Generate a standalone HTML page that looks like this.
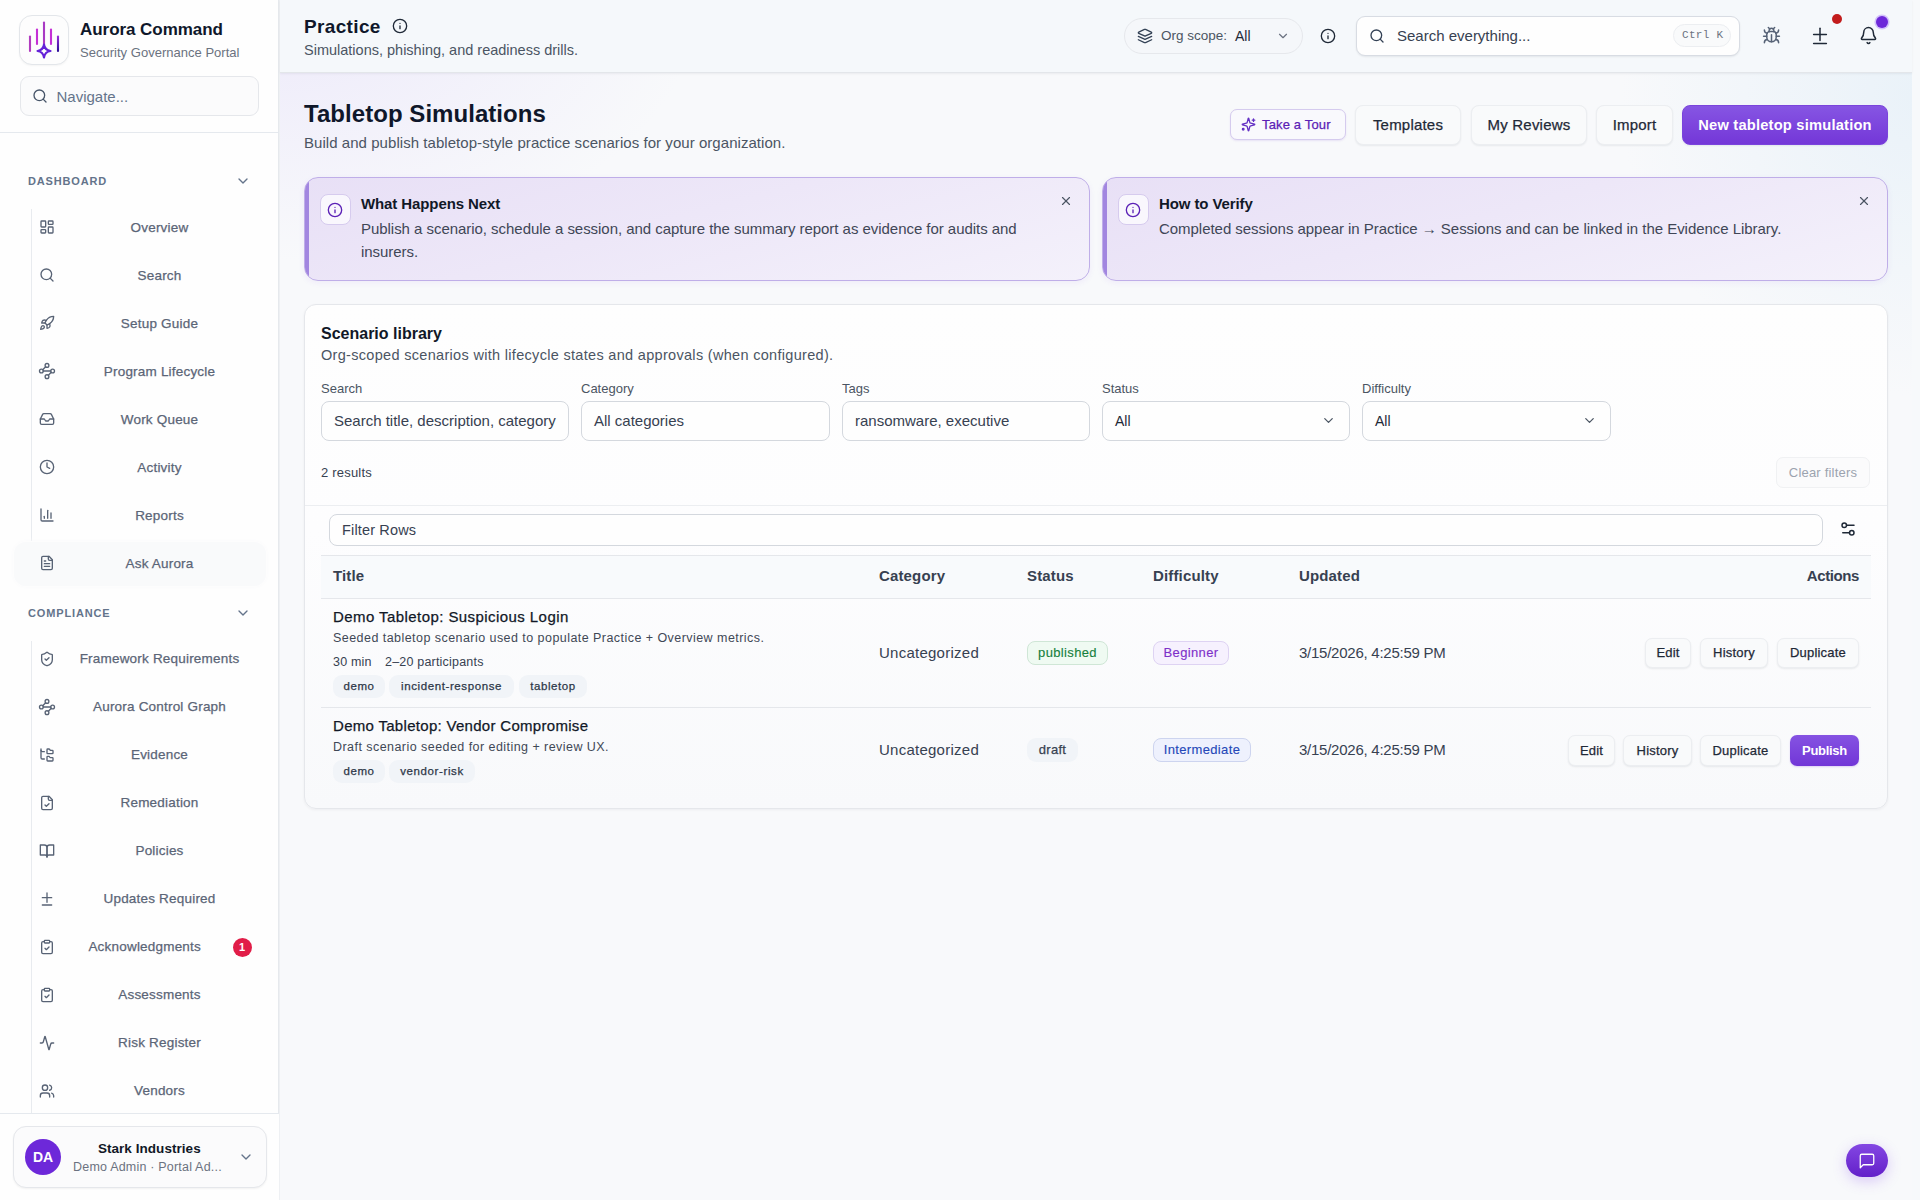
<!DOCTYPE html>
<html><head><meta charset="utf-8"><title>Practice</title><style>
*{box-sizing:border-box;margin:0;padding:0}
html,body{width:1920px;height:1200px;overflow:hidden}
body{-webkit-font-smoothing:antialiased;font-family:"Liberation Sans",sans-serif;color:#111827;background:#f8f9fb;position:relative}
.abs{position:absolute}
.t{white-space:nowrap}
.m{-webkit-text-stroke:0.25px currentColor}
.m2{-webkit-text-stroke:0.12px currentColor}
svg{display:block}
</style></head><body>
<div class="abs" style="left:280px;top:0;width:1640px;height:1200px;background:radial-gradient(ellipse 420px 260px at 0% 0%,rgba(233,228,250,.75),rgba(248,249,251,0) 100%),radial-gradient(ellipse 300px 300px at 100% 8%,rgba(230,240,248,.8),rgba(248,249,251,0) 100%),#f8f9fb"></div>
<div class="abs" style="left:1912px;top:0;width:8px;height:1200px;background:#f7f9fb"></div>
<div class="abs" style="left:0;top:0;width:279px;height:1200px;background:#fefefe;border-right:1px solid #e6e9ed;box-shadow:1px 0 0 #eef0f3"></div>
<div class="abs" style="left:19px;top:15px;width:50px;height:50px;border:1px solid #e3e6ea;border-radius:13px;background:#fdfdfd;box-shadow:0 1px 2px rgba(0,0,0,.04)"></div>
<svg class="abs" style="left:19px;top:15px" width="50" height="50" viewBox="0 0 50 50">
<defs><linearGradient id="lg" x1="0" y1="0" x2="0" y2="1"><stop offset="0" stop-color="#b83dc6"/><stop offset=".55" stop-color="#c02cd0"/><stop offset="1" stop-color="#3a10a8"/></linearGradient>
<linearGradient id="lg2" gradientUnits="userSpaceOnUse" x1="0" y1="21" x2="0" y2="36"><stop offset="0" stop-color="#9b30d8"/><stop offset="1" stop-color="#2e0f9a"/></linearGradient></defs>
<g stroke-width="2.1" stroke-linecap="round" fill="none">
<line x1="11" y1="21.5" x2="11" y2="36" stroke="#b23cc0"/>
<line x1="18" y1="14.5" x2="18" y2="29" stroke="#c52fd6"/>
<line x1="25" y1="7.5" x2="25" y2="30" stroke="#a93ac4"/>
<line x1="32" y1="14.5" x2="32" y2="29" stroke="#c52fd6"/>
<line x1="39" y1="21.5" x2="39" y2="36" stroke="url(#lg2)"/>
</g>
<path d="M25 29.5 Q25.8 35.2 31.5 36 Q25.8 36.8 25 42.5 Q24.2 36.8 18.5 36 Q24.2 35.2 25 29.5Z" fill="none" stroke="#6422d8" stroke-width="2.1" stroke-linejoin="round"/>
</svg>
<div class="abs t " style="left:80px;top:19px;font-size:17px;color:#0f172a;font-weight:700;letter-spacing:-0.05px;line-height:22px">Aurora Command</div>
<div class="abs t " style="left:80px;top:45px;font-size:13px;color:#6b7280;font-weight:400;letter-spacing:0.02px;line-height:16px">Security Governance Portal</div>
<div class="abs" style="left:20px;top:76px;width:239px;height:40px;border:1px solid #e5e7eb;border-radius:9px;background:#fbfbfc"></div>
<svg class="abs" style="left:32px;top:88px" width="16" height="16" viewBox="0 0 24 24" fill="none" stroke="#475569" stroke-width="2" stroke-linecap="round" stroke-linejoin="round"><circle cx="11" cy="11" r="8"/><path d="m21 21-4.3-4.3"/></svg>
<div class="abs t " style="left:56.5px;top:87.5px;line-height:18px;font-size:15px;color:#64748b;font-weight:400;">Navigate...</div>
<div class="abs" style="left:0;top:132px;width:279px;height:1px;background:#e5e9ee"></div>
<div class="abs t " style="left:28px;top:174.5px;line-height:13px;font-size:11px;color:#64748b;font-weight:700;letter-spacing:0.85px">DASHBOARD</div>
<svg class="abs" style="left:235px;top:173px" width="16" height="16" viewBox="0 0 24 24" fill="none" stroke="#64748b" stroke-width="2" stroke-linecap="round" stroke-linejoin="round"><path d="m6 9 6 6 6-6"/></svg>
<div class="abs" style="left:31px;top:209px;width:1px;height:332px;background:#e8ebef"></div>
<svg class="abs" style="left:39px;top:219px" width="16" height="16" viewBox="0 0 24 24" fill="none" stroke="#586375" stroke-width="2" stroke-linecap="round" stroke-linejoin="round"><rect width="7" height="9" x="3" y="3" rx="1"/><rect width="7" height="5" x="14" y="3" rx="1"/><rect width="7" height="9" x="14" y="12" rx="1"/><rect width="7" height="5" x="3" y="16" rx="1"/></svg>
<div class="abs t m" style="left:159.5px;top:219.5px;line-height:16px;font-size:13.5px;color:#5b6577;font-weight:400;transform:translateX(-50%);letter-spacing:0.2px">Overview</div>
<svg class="abs" style="left:39px;top:267px" width="16" height="16" viewBox="0 0 24 24" fill="none" stroke="#586375" stroke-width="2" stroke-linecap="round" stroke-linejoin="round"><circle cx="11" cy="11" r="8"/><path d="m21 21-4.3-4.3"/></svg>
<div class="abs t m" style="left:159.5px;top:267.5px;line-height:16px;font-size:13.5px;color:#5b6577;font-weight:400;transform:translateX(-50%);letter-spacing:0.2px">Search</div>
<svg class="abs" style="left:39px;top:315px" width="16" height="16" viewBox="0 0 24 24" fill="none" stroke="#586375" stroke-width="2" stroke-linecap="round" stroke-linejoin="round"><path d="M4.5 16.5c-1.5 1.26-2 5-2 5s3.74-.5 5-2c.71-.84.7-2.13-.09-2.91a2.18 2.18 0 0 0-2.91-.09z"/><path d="m12 15-3-3a22 22 0 0 1 2-3.95A12.88 12.88 0 0 1 22 2c0 2.72-.78 7.5-6 11a22.35 22.35 0 0 1-4 2z"/><path d="M9 12H4s.55-3.03 2-4c1.62-1.08 5 0 5 0"/><path d="M12 15v5s3.03-.55 4-2c1.08-1.62 0-5 0-5"/></svg>
<div class="abs t m" style="left:159.5px;top:315.5px;line-height:16px;font-size:13.5px;color:#5b6577;font-weight:400;transform:translateX(-50%);letter-spacing:0.2px">Setup Guide</div>
<svg class="abs" style="left:38px;top:362px" width="18" height="18" viewBox="0 0 24 24" fill="none" stroke="#586375" stroke-width="1.8" stroke-linecap="round" stroke-linejoin="round"><circle cx="12" cy="4.5" r="2.5"/><path d="m10.2 6.3-3.9 3.9"/><circle cx="4.5" cy="12" r="2.5"/><path d="M7 12h10"/><circle cx="19.5" cy="12" r="2.5"/><path d="m13.8 17.7 3.9-3.9"/><circle cx="12" cy="19.5" r="2.5"/></svg>
<div class="abs t m" style="left:159.5px;top:363.5px;line-height:16px;font-size:13.5px;color:#5b6577;font-weight:400;transform:translateX(-50%);letter-spacing:0.2px">Program Lifecycle</div>
<svg class="abs" style="left:39px;top:411px" width="16" height="16" viewBox="0 0 24 24" fill="none" stroke="#586375" stroke-width="2" stroke-linecap="round" stroke-linejoin="round"><polyline points="22 12 16 12 14 15 10 15 8 12 2 12"/><path d="M5.45 5.11 2 12v6a2 2 0 0 0 2 2h16a2 2 0 0 0 2-2v-6l-3.45-6.89A2 2 0 0 0 16.76 4H7.24a2 2 0 0 0-1.79 1.11z"/></svg>
<div class="abs t m" style="left:159.5px;top:411.5px;line-height:16px;font-size:13.5px;color:#5b6577;font-weight:400;transform:translateX(-50%);letter-spacing:0.2px">Work Queue</div>
<svg class="abs" style="left:39px;top:459px" width="16" height="16" viewBox="0 0 24 24" fill="none" stroke="#586375" stroke-width="2" stroke-linecap="round" stroke-linejoin="round"><circle cx="12" cy="12" r="10"/><polyline points="12 6 12 12 16 14"/></svg>
<div class="abs t m" style="left:159.5px;top:459.5px;line-height:16px;font-size:13.5px;color:#5b6577;font-weight:400;transform:translateX(-50%);letter-spacing:0.2px">Activity</div>
<svg class="abs" style="left:39px;top:507px" width="16" height="16" viewBox="0 0 24 24" fill="none" stroke="#586375" stroke-width="2" stroke-linecap="round" stroke-linejoin="round"><path d="M3 3v16a2 2 0 0 0 2 2h16"/><path d="M18 17V9"/><path d="M13 17V5"/><path d="M8 17v-3"/></svg>
<div class="abs t m" style="left:159.5px;top:507.5px;line-height:16px;font-size:13.5px;color:#5b6577;font-weight:400;transform:translateX(-50%);letter-spacing:0.2px">Reports</div>
<div class="abs" style="left:14px;top:542px;width:252px;height:44px;border-radius:12px;background:#f9fafb;box-shadow:0 0 4px 1px #fbfbfc"></div>
<svg class="abs" style="left:39px;top:555px" width="16" height="16" viewBox="0 0 24 24" fill="none" stroke="#586375" stroke-width="2" stroke-linecap="round" stroke-linejoin="round"><path d="M15 2H6a2 2 0 0 0-2 2v16a2 2 0 0 0 2 2h12a2 2 0 0 0 2-2V7Z"/><path d="M14 2v4a2 2 0 0 0 2 2h4"/><path d="M10 9H8"/><path d="M16 13H8"/><path d="M16 17H8"/></svg>
<div class="abs t m" style="left:159.5px;top:556.0px;line-height:16px;font-size:13.5px;color:#5b6577;font-weight:400;transform:translateX(-50%);letter-spacing:0.2px">Ask Aurora</div>
<div class="abs t " style="left:28px;top:606.5px;line-height:13px;font-size:11px;color:#64748b;font-weight:700;letter-spacing:0.85px">COMPLIANCE</div>
<svg class="abs" style="left:235px;top:605px" width="16" height="16" viewBox="0 0 24 24" fill="none" stroke="#64748b" stroke-width="2" stroke-linecap="round" stroke-linejoin="round"><path d="m6 9 6 6 6-6"/></svg>
<div class="abs" style="left:31px;top:641px;width:1px;height:472px;background:#e8ebef"></div>
<svg class="abs" style="left:39px;top:651px" width="16" height="16" viewBox="0 0 24 24" fill="none" stroke="#586375" stroke-width="2" stroke-linecap="round" stroke-linejoin="round"><path d="M20 13c0 5-3.5 7.5-7.66 8.95a1 1 0 0 1-.67-.01C7.5 20.5 4 18 4 13V6a1 1 0 0 1 1-1c2 0 4.5-1.2 6.24-2.72a1.17 1.17 0 0 1 1.52 0C14.51 3.81 17 5 19 5a1 1 0 0 1 1 1z"/><path d="m9 12 2 2 4-4"/></svg>
<div class="abs t m" style="left:159.5px;top:651.0px;line-height:16px;font-size:13.5px;color:#5b6577;font-weight:400;transform:translateX(-50%);letter-spacing:0.2px">Framework Requirements</div>
<svg class="abs" style="left:38px;top:698px" width="18" height="18" viewBox="0 0 24 24" fill="none" stroke="#586375" stroke-width="1.8" stroke-linecap="round" stroke-linejoin="round"><circle cx="12" cy="4.5" r="2.5"/><path d="m10.2 6.3-3.9 3.9"/><circle cx="4.5" cy="12" r="2.5"/><path d="M7 12h10"/><circle cx="19.5" cy="12" r="2.5"/><path d="m13.8 17.7 3.9-3.9"/><circle cx="12" cy="19.5" r="2.5"/></svg>
<div class="abs t m" style="left:159.5px;top:699.0px;line-height:16px;font-size:13.5px;color:#5b6577;font-weight:400;transform:translateX(-50%);letter-spacing:0.2px">Aurora Control Graph</div>
<svg class="abs" style="left:39px;top:747px" width="16" height="16" viewBox="0 0 24 24" fill="none" stroke="#586375" stroke-width="2" stroke-linecap="round" stroke-linejoin="round"><path d="M20 10a1 1 0 0 0 1-1V6a1 1 0 0 0-1-1h-2.5a1 1 0 0 1-.8-.4l-.9-1.2A1 1 0 0 0 15 3h-2a1 1 0 0 0-1 1v5a1 1 0 0 0 1 1Z"/><path d="M20 21a1 1 0 0 0 1-1v-3a1 1 0 0 0-1-1h-2.9a1 1 0 0 1-.88-.55l-.42-.85a1 1 0 0 0-.92-.6H13a1 1 0 0 0-1 1v5a1 1 0 0 0 1 1Z"/><path d="M3 5a2 2 0 0 0 2 2h3"/><path d="M3 3v13a2 2 0 0 0 2 2h3"/></svg>
<div class="abs t m" style="left:159.5px;top:747.0px;line-height:16px;font-size:13.5px;color:#5b6577;font-weight:400;transform:translateX(-50%);letter-spacing:0.2px">Evidence</div>
<svg class="abs" style="left:39px;top:795px" width="16" height="16" viewBox="0 0 24 24" fill="none" stroke="#586375" stroke-width="2" stroke-linecap="round" stroke-linejoin="round"><path d="M15 2H6a2 2 0 0 0-2 2v16a2 2 0 0 0 2 2h12a2 2 0 0 0 2-2V7Z"/><path d="M14 2v4a2 2 0 0 0 2 2h4"/><path d="m9 15 2 2 4-4"/></svg>
<div class="abs t m" style="left:159.5px;top:795.0px;line-height:16px;font-size:13.5px;color:#5b6577;font-weight:400;transform:translateX(-50%);letter-spacing:0.2px">Remediation</div>
<svg class="abs" style="left:39px;top:843px" width="16" height="16" viewBox="0 0 24 24" fill="none" stroke="#586375" stroke-width="2" stroke-linecap="round" stroke-linejoin="round"><path d="M2 3h6a4 4 0 0 1 4 4v14a3 3 0 0 0-3-3H2z"/><path d="M22 3h-6a4 4 0 0 0-4 4v14a3 3 0 0 1 3-3h7z"/></svg>
<div class="abs t m" style="left:159.5px;top:843.0px;line-height:16px;font-size:13.5px;color:#5b6577;font-weight:400;transform:translateX(-50%);letter-spacing:0.2px">Policies</div>
<svg class="abs" style="left:39px;top:891px" width="16" height="16" viewBox="0 0 24 24" fill="none" stroke="#586375" stroke-width="2" stroke-linecap="round" stroke-linejoin="round"><path d="M12 3v14"/><path d="M5 10h14"/><path d="M5 21h14"/></svg>
<div class="abs t m" style="left:159.5px;top:891.0px;line-height:16px;font-size:13.5px;color:#5b6577;font-weight:400;transform:translateX(-50%);letter-spacing:0.2px">Updates Required</div>
<svg class="abs" style="left:39px;top:939px" width="16" height="16" viewBox="0 0 24 24" fill="none" stroke="#586375" stroke-width="2" stroke-linecap="round" stroke-linejoin="round"><rect width="8" height="4" x="8" y="2" rx="1" ry="1"/><path d="M16 4h2a2 2 0 0 1 2 2v14a2 2 0 0 1-2 2H6a2 2 0 0 1-2-2V6a2 2 0 0 1 2-2h2"/><path d="m9 14 2 2 4-4"/></svg>
<div class="abs t m" style="left:144.7px;top:939.0px;line-height:16px;font-size:13.5px;color:#5b6577;font-weight:400;transform:translateX(-50%);letter-spacing:0.2px">Acknowledgments</div>
<svg class="abs" style="left:39px;top:987px" width="16" height="16" viewBox="0 0 24 24" fill="none" stroke="#586375" stroke-width="2" stroke-linecap="round" stroke-linejoin="round"><rect width="8" height="4" x="8" y="2" rx="1" ry="1"/><path d="M16 4h2a2 2 0 0 1 2 2v14a2 2 0 0 1-2 2H6a2 2 0 0 1-2-2V6a2 2 0 0 1 2-2h2"/><path d="m9 14 2 2 4-4"/></svg>
<div class="abs t m" style="left:159.5px;top:987.0px;line-height:16px;font-size:13.5px;color:#5b6577;font-weight:400;transform:translateX(-50%);letter-spacing:0.2px">Assessments</div>
<svg class="abs" style="left:39px;top:1035px" width="16" height="16" viewBox="0 0 24 24" fill="none" stroke="#586375" stroke-width="2" stroke-linecap="round" stroke-linejoin="round"><path d="M22 12h-2.48a2 2 0 0 0-1.93 1.46l-2.35 8.36a.25.25 0 0 1-.48 0L9.24 2.18a.25.25 0 0 0-.48 0l-2.35 8.36A2 2 0 0 1 4.49 12H2"/></svg>
<div class="abs t m" style="left:159.5px;top:1035.0px;line-height:16px;font-size:13.5px;color:#5b6577;font-weight:400;transform:translateX(-50%);letter-spacing:0.2px">Risk Register</div>
<svg class="abs" style="left:39px;top:1083px" width="16" height="16" viewBox="0 0 24 24" fill="none" stroke="#586375" stroke-width="2" stroke-linecap="round" stroke-linejoin="round"><path d="M16 21v-2a4 4 0 0 0-4-4H6a4 4 0 0 0-4 4v2"/><circle cx="9" cy="7" r="4"/><path d="M22 21v-2a4 4 0 0 0-3-3.87"/><path d="M16 3.13a4 4 0 0 1 0 7.75"/></svg>
<div class="abs t m" style="left:159.5px;top:1083.0px;line-height:16px;font-size:13.5px;color:#5b6577;font-weight:400;transform:translateX(-50%);letter-spacing:0.2px">Vendors</div>
<div class="abs" style="left:232.5px;top:937.5px;width:19px;height:19px;border-radius:50%;background:#e11d48;color:#fff;font-size:11px;font-weight:700;line-height:19px;text-align:center">1</div>
<div class="abs" style="left:0;top:1113px;width:279px;height:87px;background:#fefefe;border-top:1px solid #e5e9ee"></div>
<div class="abs" style="left:13px;top:1126px;width:254px;height:62px;border:1px solid #e5e7eb;border-radius:13px;background:#fbfbfc;box-shadow:0 1px 2px rgba(0,0,0,.05)"></div>
<div class="abs" style="left:25px;top:1139px;width:36px;height:36px;border-radius:50%;background:#6d28d9;color:#fff;font-size:14px;font-weight:700;line-height:36px;text-align:center">DA</div>
<div class="abs t " style="left:149.3px;top:1140.5px;line-height:16px;font-size:13.5px;color:#111827;font-weight:700;transform:translateX(-50%);letter-spacing:0.05px">Stark Industries</div>
<div class="abs t " style="left:73px;top:1159.8px;line-height:15px;font-size:12.5px;color:#6b7280;font-weight:400;letter-spacing:0.2px">Demo Admin · Portal Ad...</div>
<svg class="abs" style="left:238px;top:1149px" width="16" height="16" viewBox="0 0 24 24" fill="none" stroke="#64748b" stroke-width="2" stroke-linecap="round" stroke-linejoin="round"><path d="m6 9 6 6 6-6"/></svg>
<div class="abs" style="left:280px;top:0;width:1632px;height:73px;background:#f5f8fb;border-bottom:1px solid #e3e6ea;box-shadow:0 1px 2px rgba(15,23,42,.06)"></div>
<div class="abs t " style="left:304px;top:15px;font-size:19px;color:#0f172a;font-weight:700;line-height:24px;letter-spacing:0.35px">Practice</div>
<svg class="abs" style="left:392px;top:18px" width="16" height="16" viewBox="0 0 24 24" fill="none" stroke="#1f2937" stroke-width="2" stroke-linecap="round" stroke-linejoin="round"><circle cx="12" cy="12" r="10"/><path d="M12 16v-4"/><path d="M12 8h.01"/></svg>
<div class="abs t " style="left:304px;top:41.5px;line-height:17px;font-size:14.5px;color:#4b5563;font-weight:400;letter-spacing:0px">Simulations, phishing, and readiness drills.</div>
<div class="abs" style="left:1124px;top:18px;width:179px;height:36px;border:1px solid #e6e8ec;border-radius:18px;background:#f5f7fa"></div>
<svg class="abs" style="left:1137px;top:28px" width="16" height="16" viewBox="0 0 24 24" fill="none" stroke="#334155" stroke-width="2" stroke-linecap="round" stroke-linejoin="round"><path d="m12.83 2.18a2 2 0 0 0-1.66 0L2.6 6.08a1 1 0 0 0 0 1.83l8.58 3.91a2 2 0 0 0 1.66 0l8.58-3.9a1 1 0 0 0 0-1.83Z"/><path d="m22 17.65-9.17 4.16a2 2 0 0 1-1.66 0L2 17.65"/><path d="m22 12.65-9.17 4.16a2 2 0 0 1-1.66 0L2 12.65"/></svg>
<div class="abs t " style="left:1161px;top:28.0px;line-height:16px;font-size:13.5px;color:#4b5563;font-weight:400;letter-spacing:0px">Org scope:</div>
<div class="abs t " style="left:1235px;top:27.5px;line-height:17px;font-size:14px;color:#1f2937;font-weight:400;">All</div>
<svg class="abs" style="left:1276px;top:29px" width="14" height="14" viewBox="0 0 24 24" fill="none" stroke="#6b7280" stroke-width="2" stroke-linecap="round" stroke-linejoin="round"><path d="m6 9 6 6 6-6"/></svg>
<svg class="abs" style="left:1320px;top:28px" width="16" height="16" viewBox="0 0 24 24" fill="none" stroke="#1f2937" stroke-width="2" stroke-linecap="round" stroke-linejoin="round"><circle cx="12" cy="12" r="10"/><path d="M12 16v-4"/><path d="M12 8h.01"/></svg>
<div class="abs" style="left:1356px;top:16px;width:384px;height:40px;border:1px solid #d8dce3;border-radius:9px;background:#fefefe;box-shadow:0 1px 2px rgba(15,23,42,.08)"></div>
<svg class="abs" style="left:1369px;top:28px" width="16" height="16" viewBox="0 0 24 24" fill="none" stroke="#334155" stroke-width="2" stroke-linecap="round" stroke-linejoin="round"><circle cx="11" cy="11" r="8"/><path d="m21 21-4.3-4.3"/></svg>
<div class="abs t " style="left:1397px;top:27.0px;line-height:18px;font-size:15px;color:#374151;font-weight:400;letter-spacing:0px">Search everything...</div>
<div class="abs" style="left:1673px;top:24px;width:58px;height:23px;border:1px solid #eceef1;border-radius:12px;background:#f9fafb"></div>
<div class="abs t " style="left:1682px;top:29.0px;line-height:13px;font-size:11px;color:#6b7280;font-weight:400;font-family:'Liberation Mono',monospace;letter-spacing:0.3px">Ctrl K</div>
<svg class="abs" style="left:1762px;top:26px" width="19" height="19" viewBox="0 0 24 24" fill="none" stroke="#566276" stroke-width="1.9" stroke-linecap="round" stroke-linejoin="round"><path d="m8 2 1.88 1.88"/><path d="M14.12 3.88 16 2"/><path d="M9 7.13v-1a3.003 3.003 0 1 1 6 0v1"/><path d="M12 20c-3.3 0-6-2.7-6-6v-3a4 4 0 0 1 4-4h4a4 4 0 0 1 4 4v3c0 3.3-2.7 6-6 6"/><path d="M12 20v-9"/><path d="M6.53 9C4.6 8.8 3 7.1 3 5"/><path d="M6 13H2"/><path d="M3 21c0-2.1 1.7-3.9 3.8-4"/><path d="M20.97 5c0 2.1-1.6 3.8-3.5 4"/><path d="M22 13h-4"/><path d="M17.2 17c2.1.1 3.8 1.9 3.8 4"/></svg>
<svg class="abs" style="left:1810px;top:25px" width="20" height="22" viewBox="0 0 20 22" fill="none" stroke="#1f2937" stroke-width="1.5" stroke-linecap="round"><path d="M10 3.2v12.3"/><path d="M3.6 9.4h12.8"/><path d="M3.6 18.5h12.8"/></svg>
<div class="abs" style="left:1832px;top:14px;width:10px;height:10px;border-radius:50%;background:#c21c1c"></div>
<svg class="abs" style="left:1858.5px;top:26px" width="19" height="19" viewBox="0 0 24 24" fill="none" stroke="#1f2937" stroke-width="1.9" stroke-linecap="round" stroke-linejoin="round"><path d="M10.268 21a2 2 0 0 0 3.464 0"/><path d="M3.262 15.326A1 1 0 0 0 4 17h16a1 1 0 0 0 .74-1.673C19.41 13.956 18 12.499 18 8A6 6 0 0 0 6 8c0 4.499-1.411 5.956-2.738 7.326"/></svg>
<div class="abs" style="left:1876px;top:16px;width:12px;height:12px;border-radius:50%;background:#6d28d9;box-shadow:0 0 0 1.6px #d3c2fb"></div>
<div class="abs t " style="left:304px;top:100px;font-size:24px;color:#0f172a;font-weight:700;line-height:28px;letter-spacing:0.05px">Tabletop Simulations</div>
<div class="abs t " style="left:304px;top:134.0px;line-height:18px;font-size:15px;color:#4b5563;font-weight:400;letter-spacing:0.05px">Build and publish tabletop-style practice scenarios for your organization.</div>
<div class="abs" style="left:1230px;top:109px;width:116px;height:31px;border:1px solid #d5cbee;border-radius:7px;background:#f9f9fd;box-shadow:0 1px 2px rgba(91,33,182,.10)"></div>
<svg class="abs" style="left:1241px;top:117px" width="15" height="15" viewBox="0 0 24 24" fill="none" stroke="#6330c4" stroke-width="2.1" stroke-linecap="round" stroke-linejoin="round"><path d="M9.937 15.5A2 2 0 0 0 8.5 14.063l-6.135-1.582a.5.5 0 0 1 0-.962L8.5 9.936A2 2 0 0 0 9.937 8.5l1.582-6.135a.5.5 0 0 1 .963 0L14.063 8.5A2 2 0 0 0 15.5 9.937l6.135 1.581a.5.5 0 0 1 0 .964L15.5 14.063a2 2 0 0 0-1.437 1.437l-1.582 6.135a.5.5 0 0 1-.963 0z"/><path d="M20 3v4"/><path d="M22 5h-4"/><circle cx="3.5" cy="19.5" r="1.3"/></svg>
<div class="abs t m" style="left:1262px;top:116.5px;line-height:16px;font-size:13px;color:#5b21b6;font-weight:400;letter-spacing:0.15px">Take a Tour</div>
<div class="abs" style="left:1355px;top:105px;width:106px;height:40px;border:1px solid #eceef1;border-radius:8px;background:#f9fafb;box-shadow:0 1px 2px rgba(15,23,42,.07);"></div>
<div class="abs t m" style="left:1408.0px;top:116.0px;line-height:18px;font-size:15px;color:#1f2937;font-weight:400;transform:translateX(-50%);letter-spacing:0.2px">Templates</div>
<div class="abs" style="left:1471px;top:105px;width:116px;height:40px;border:1px solid #eceef1;border-radius:8px;background:#f9fafb;box-shadow:0 1px 2px rgba(15,23,42,.07);"></div>
<div class="abs t m" style="left:1529.0px;top:116.0px;line-height:18px;font-size:15px;color:#1f2937;font-weight:400;transform:translateX(-50%);letter-spacing:0.2px">My Reviews</div>
<div class="abs" style="left:1596px;top:105px;width:77px;height:40px;border:1px solid #eceef1;border-radius:8px;background:#f9fafb;box-shadow:0 1px 2px rgba(15,23,42,.07);"></div>
<div class="abs t m" style="left:1634.5px;top:116.0px;line-height:18px;font-size:15px;color:#1f2937;font-weight:400;transform:translateX(-50%);letter-spacing:0.2px">Import</div>
<div class="abs" style="left:1682px;top:105px;width:206px;height:40px;border:1px solid #7a44dc;border-radius:8px;background:linear-gradient(180deg,#8655e3,#7437d8);box-shadow:0 1px 2px rgba(15,23,42,.07);"></div>
<div class="abs t " style="left:1785.0px;top:116.0px;line-height:18px;font-size:14.7px;color:#ffffff;font-weight:700;transform:translateX(-50%);letter-spacing:0.2px">New tabletop simulation</div>
<div class="abs" style="left:304px;top:177px;width:786px;height:104px;border:1px solid #bfaee8;border-radius:14px;background:linear-gradient(165deg,#e8e0f6 0%,#ede7f8 45%,#f4f1fb 100%);box-shadow:0 2px 6px rgba(109,40,217,.06);overflow:hidden"><div style="position:absolute;left:0;top:0;width:4px;height:100%;background:#a286e0"></div></div>
<div class="abs" style="left:320px;top:194px;width:31px;height:31px;border:1px solid #d6cbee;border-radius:8px;background:#f9f7fd"></div>
<svg class="abs" style="left:327px;top:202px" width="16" height="16" viewBox="0 0 24 24" fill="none" stroke="#5b21b6" stroke-width="2" stroke-linecap="round" stroke-linejoin="round"><circle cx="12" cy="12" r="10"/><path d="M12 16v-4"/><path d="M12 8h.01"/></svg>
<div class="abs t " style="left:361px;top:194.5px;line-height:18px;font-size:15px;color:#111827;font-weight:700;letter-spacing:-0.1px">What Happens Next</div>
<div class="abs t " style="left:361px;top:220.0px;line-height:18px;font-size:15px;color:#404656;font-weight:400;letter-spacing:-0.04px">Publish a scenario, schedule a session, and capture the summary report as evidence for audits and</div>
<div class="abs t " style="left:361px;top:243.0px;line-height:18px;font-size:15px;color:#404656;font-weight:400;letter-spacing:-0.04px">insurers.</div>
<svg class="abs" style="left:1059px;top:194px" width="14" height="14" viewBox="0 0 24 24" fill="none" stroke="#4b5563" stroke-width="2" stroke-linecap="round" stroke-linejoin="round"><path d="M18 6 6 18"/><path d="m6 6 12 12"/></svg>
<div class="abs" style="left:1102px;top:177px;width:786px;height:104px;border:1px solid #bfaee8;border-radius:14px;background:linear-gradient(165deg,#e8e0f6 0%,#ede7f8 45%,#f4f1fb 100%);box-shadow:0 2px 6px rgba(109,40,217,.06);overflow:hidden"><div style="position:absolute;left:0;top:0;width:4px;height:100%;background:#a286e0"></div></div>
<div class="abs" style="left:1118px;top:194px;width:31px;height:31px;border:1px solid #d6cbee;border-radius:8px;background:#f9f7fd"></div>
<svg class="abs" style="left:1125px;top:202px" width="16" height="16" viewBox="0 0 24 24" fill="none" stroke="#5b21b6" stroke-width="2" stroke-linecap="round" stroke-linejoin="round"><circle cx="12" cy="12" r="10"/><path d="M12 16v-4"/><path d="M12 8h.01"/></svg>
<div class="abs t " style="left:1159px;top:194.5px;line-height:18px;font-size:15px;color:#111827;font-weight:700;letter-spacing:-0.1px">How to Verify</div>
<div class="abs t " style="left:1159px;top:220.0px;line-height:18px;font-size:15px;color:#404656;font-weight:400;letter-spacing:-0.04px">Completed sessions appear in Practice &#8594; Sessions and can be linked in the Evidence Library.</div>
<svg class="abs" style="left:1857px;top:194px" width="14" height="14" viewBox="0 0 24 24" fill="none" stroke="#4b5563" stroke-width="2" stroke-linecap="round" stroke-linejoin="round"><path d="M18 6 6 18"/><path d="m6 6 12 12"/></svg>
<div class="abs" style="left:304px;top:304px;width:1584px;height:505px;border:1px solid #e5e7eb;border-radius:12px;background:linear-gradient(180deg,#fefefe 0%,#fdfdfe 45%,#f8f9fb 100%);box-shadow:0 1px 3px rgba(15,23,42,.05)"></div>
<div class="abs t " style="left:321px;top:323.5px;line-height:19px;font-size:16px;color:#111827;font-weight:700;letter-spacing:0px">Scenario library</div>
<div class="abs t " style="left:321px;top:346.5px;line-height:17px;font-size:14.5px;color:#4b5563;font-weight:400;letter-spacing:0.31px">Org-scoped scenarios with lifecycle states and approvals (when configured).</div>
<div class="abs t " style="left:321px;top:381.0px;line-height:16px;font-size:13px;color:#4b5563;font-weight:400;letter-spacing:0px">Search</div>
<div class="abs" style="left:321px;top:401px;width:248px;height:40px;border:1px solid #d4d8de;border-radius:8px;background:#fefefe"></div>
<div class="abs t " style="left:334px;top:412.0px;line-height:18px;font-size:15px;color:#374151;font-weight:400;letter-spacing:0px">Search title, description, category</div>
<div class="abs t " style="left:581px;top:381.0px;line-height:16px;font-size:13px;color:#4b5563;font-weight:400;letter-spacing:0px">Category</div>
<div class="abs" style="left:581px;top:401px;width:249px;height:40px;border:1px solid #d4d8de;border-radius:8px;background:#fefefe"></div>
<div class="abs t " style="left:594px;top:412.0px;line-height:18px;font-size:15px;color:#374151;font-weight:400;letter-spacing:0px">All categories</div>
<div class="abs t " style="left:842px;top:381.0px;line-height:16px;font-size:13px;color:#4b5563;font-weight:400;letter-spacing:0px">Tags</div>
<div class="abs" style="left:842px;top:401px;width:248px;height:40px;border:1px solid #d4d8de;border-radius:8px;background:#fefefe"></div>
<div class="abs t " style="left:855px;top:412.0px;line-height:18px;font-size:15px;color:#374151;font-weight:400;letter-spacing:0px">ransomware, executive</div>
<div class="abs t " style="left:1102px;top:381.0px;line-height:16px;font-size:13px;color:#4b5563;font-weight:400;letter-spacing:0px">Status</div>
<div class="abs" style="left:1102px;top:401px;width:248px;height:40px;border:1px solid #d4d8de;border-radius:8px;background:#fefefe"></div>
<div class="abs t " style="left:1115px;top:412.5px;line-height:17px;font-size:14px;color:#1f2937;font-weight:400;letter-spacing:0px">All</div>
<svg class="abs" style="left:1321px;top:413px" width="15" height="15" viewBox="0 0 24 24" fill="none" stroke="#4b5563" stroke-width="2" stroke-linecap="round" stroke-linejoin="round"><path d="m6 9 6 6 6-6"/></svg>
<div class="abs t " style="left:1362px;top:381.0px;line-height:16px;font-size:13px;color:#4b5563;font-weight:400;letter-spacing:0px">Difficulty</div>
<div class="abs" style="left:1362px;top:401px;width:249px;height:40px;border:1px solid #d4d8de;border-radius:8px;background:#fefefe"></div>
<div class="abs t " style="left:1375px;top:412.5px;line-height:17px;font-size:14px;color:#1f2937;font-weight:400;letter-spacing:0px">All</div>
<svg class="abs" style="left:1582px;top:413px" width="15" height="15" viewBox="0 0 24 24" fill="none" stroke="#4b5563" stroke-width="2" stroke-linecap="round" stroke-linejoin="round"><path d="m6 9 6 6 6-6"/></svg>
<div class="abs t " style="left:321px;top:465.0px;line-height:16px;font-size:13px;color:#374151;font-weight:400;letter-spacing:0.2px">2 results</div>
<div class="abs" style="left:1776px;top:457px;width:94px;height:31px;border:1px solid #f0f1f3;border-radius:7px;background:#fbfbfc"></div>
<div class="abs t " style="left:1823px;top:464.5px;line-height:16px;font-size:13px;color:#9ca3af;font-weight:400;transform:translateX(-50%);letter-spacing:0.2px">Clear filters</div>
<div class="abs" style="left:305px;top:505px;width:1582px;height:1px;background:#eceef1"></div>
<div class="abs" style="left:329px;top:514px;width:1494px;height:32px;border:1px solid #d4d8de;border-radius:8px;background:#fefefe"></div>
<div class="abs t " style="left:342px;top:521.5px;line-height:17px;font-size:14.5px;color:#374151;font-weight:400;letter-spacing:0.15px">Filter Rows</div>
<svg class="abs" style="left:1838.5px;top:520px" width="18" height="18" viewBox="0 0 24 24" fill="none" stroke="#1f2937" stroke-width="2" stroke-linecap="round" stroke-linejoin="round"><path d="M20 7h-9"/><path d="M14 17H5"/><circle cx="17" cy="17" r="3"/><circle cx="7" cy="7" r="3"/></svg>
<div class="abs" style="left:321px;top:555px;width:1550px;height:44px;background:#f8fafc;border-top:1px solid #e5e7eb;border-bottom:1px solid #e5e7eb"></div>
<div class="abs t " style="left:333px;top:567.0px;line-height:18px;font-size:15px;color:#374151;font-weight:700;letter-spacing:0.15px">Title</div>
<div class="abs t " style="left:879px;top:567.0px;line-height:18px;font-size:15px;color:#374151;font-weight:700;letter-spacing:0.15px">Category</div>
<div class="abs t " style="left:1027px;top:567.0px;line-height:18px;font-size:15px;color:#374151;font-weight:700;letter-spacing:0.15px">Status</div>
<div class="abs t " style="left:1153px;top:567.0px;line-height:18px;font-size:15px;color:#374151;font-weight:700;letter-spacing:0.15px">Difficulty</div>
<div class="abs t " style="left:1299px;top:567.0px;line-height:18px;font-size:15px;color:#374151;font-weight:700;letter-spacing:0.15px">Updated</div>
<div class="abs t " style="left:1859px;top:567.0px;line-height:18px;font-size:15px;color:#374151;font-weight:700;transform:translateX(-100%);letter-spacing:-0.4px">Actions</div>
<div class="abs" style="left:321px;top:707px;width:1550px;height:1px;background:#e5e7eb"></div>
<div class="abs t m" style="left:333px;top:608.0px;line-height:18px;font-size:15px;color:#111827;font-weight:400;letter-spacing:0.43px">Demo Tabletop: Suspicious Login</div>
<div class="abs t " style="left:333px;top:631.0px;line-height:15px;font-size:12.5px;color:#3f4856;font-weight:400;letter-spacing:0.45px">Seeded tabletop scenario used to populate Practice + Overview metrics.</div>
<div class="abs t " style="left:333px;top:655.0px;line-height:15px;font-size:12.5px;color:#374151;font-weight:400;letter-spacing:0.2px">30 min</div>
<div class="abs t " style="left:385px;top:655.0px;line-height:15px;font-size:12.5px;color:#374151;font-weight:400;letter-spacing:0.2px">2&#8211;20 participants</div>
<div class="abs" style="left:333px;top:674.5px;width:52px;height:23px;border-radius:9px;background:#f1f4f8"></div>
<div class="abs t m" style="left:359.0px;top:679.0px;line-height:14px;font-size:11.5px;color:#2d3748;font-weight:400;transform:translateX(-50%);letter-spacing:0.6px">demo</div>
<div class="abs" style="left:389px;top:674.5px;width:125px;height:23px;border-radius:9px;background:#f1f4f8"></div>
<div class="abs t m" style="left:451.5px;top:679.0px;line-height:14px;font-size:11.5px;color:#2d3748;font-weight:400;transform:translateX(-50%);letter-spacing:0.6px">incident-response</div>
<div class="abs" style="left:519px;top:674.5px;width:68px;height:23px;border-radius:9px;background:#f1f4f8"></div>
<div class="abs t m" style="left:553.0px;top:679.0px;line-height:14px;font-size:11.5px;color:#2d3748;font-weight:400;transform:translateX(-50%);letter-spacing:0.6px">tabletop</div>
<div class="abs t " style="left:879px;top:644.0px;line-height:18px;font-size:15px;color:#374151;font-weight:400;letter-spacing:0.25px">Uncategorized</div>
<div class="abs" style="left:1027px;top:641px;width:81px;height:24px;border:1px solid #cfe6d6;border-radius:8px;background:#effaf2"></div>
<div class="abs t m2" style="left:1067.5px;top:645.0px;line-height:16px;font-size:13px;color:#15803d;font-weight:400;transform:translateX(-50%);letter-spacing:0.35px">published</div>
<div class="abs" style="left:1153px;top:641px;width:76px;height:24px;border:1px solid #ded3f3;border-radius:8px;background:#f6f1fe"></div>
<div class="abs t m2" style="left:1191.0px;top:645.0px;line-height:16px;font-size:13px;color:#7e30c9;font-weight:400;transform:translateX(-50%);letter-spacing:0.35px">Beginner</div>
<div class="abs t " style="left:1299px;top:644.0px;line-height:18px;font-size:15px;color:#374151;font-weight:400;letter-spacing:-0.25px">3/15/2026, 4:25:59 PM</div>
<div class="abs" style="left:1645px;top:638px;width:46px;height:30px;border:1px solid #eceef1;border-radius:7px;background:#f9fafb;box-shadow:0 1px 2px rgba(15,23,42,.08)"></div>
<div class="abs t m" style="left:1668.0px;top:645.0px;line-height:16px;font-size:13px;color:#1f2937;font-weight:400;transform:translateX(-50%);letter-spacing:0.2px">Edit</div>
<div class="abs" style="left:1700px;top:638px;width:68px;height:30px;border:1px solid #eceef1;border-radius:7px;background:#f9fafb;box-shadow:0 1px 2px rgba(15,23,42,.08)"></div>
<div class="abs t m" style="left:1734.0px;top:645.0px;line-height:16px;font-size:13px;color:#1f2937;font-weight:400;transform:translateX(-50%);letter-spacing:0.2px">History</div>
<div class="abs" style="left:1777px;top:638px;width:82px;height:30px;border:1px solid #eceef1;border-radius:7px;background:#f9fafb;box-shadow:0 1px 2px rgba(15,23,42,.08)"></div>
<div class="abs t m" style="left:1818.0px;top:645.0px;line-height:16px;font-size:13px;color:#1f2937;font-weight:400;transform:translateX(-50%);letter-spacing:0.2px">Duplicate</div>
<div class="abs t m" style="left:333px;top:717.0px;line-height:18px;font-size:15px;color:#111827;font-weight:400;letter-spacing:0.3px">Demo Tabletop: Vendor Compromise</div>
<div class="abs t " style="left:333px;top:740.0px;line-height:15px;font-size:12.5px;color:#3f4856;font-weight:400;letter-spacing:0.45px">Draft scenario seeded for editing + review UX.</div>
<div class="abs" style="left:333px;top:759.5px;width:52px;height:23px;border-radius:9px;background:#f1f4f8"></div>
<div class="abs t m" style="left:359.0px;top:764.0px;line-height:14px;font-size:11.5px;color:#2d3748;font-weight:400;transform:translateX(-50%);letter-spacing:0.6px">demo</div>
<div class="abs" style="left:389px;top:759.5px;width:86px;height:23px;border-radius:9px;background:#f1f4f8"></div>
<div class="abs t m" style="left:432.0px;top:764.0px;line-height:14px;font-size:11.5px;color:#2d3748;font-weight:400;transform:translateX(-50%);letter-spacing:0.6px">vendor-risk</div>
<div class="abs t " style="left:879px;top:741.0px;line-height:18px;font-size:15px;color:#374151;font-weight:400;letter-spacing:0.25px">Uncategorized</div>
<div class="abs" style="left:1027px;top:738px;width:51px;height:24px;border-radius:9px;background:#f1f4f8"></div>
<div class="abs t m" style="left:1052.5px;top:742.0px;line-height:16px;font-size:13px;color:#374151;font-weight:400;transform:translateX(-50%);letter-spacing:0.3px">draft</div>
<div class="abs" style="left:1153px;top:738px;width:98px;height:24px;border:1px solid #cdd4ef;border-radius:8px;background:#eef1fd"></div>
<div class="abs t m2" style="left:1202.0px;top:742.0px;line-height:16px;font-size:13px;color:#2447b8;font-weight:400;transform:translateX(-50%);letter-spacing:0.35px">Intermediate</div>
<div class="abs t " style="left:1299px;top:741.0px;line-height:18px;font-size:15px;color:#374151;font-weight:400;letter-spacing:-0.25px">3/15/2026, 4:25:59 PM</div>
<div class="abs" style="left:1568px;top:735px;width:47px;height:31px;border:1px solid #eceef1;border-radius:7px;background:#f9fafb;box-shadow:0 1px 2px rgba(15,23,42,.08)"></div>
<div class="abs t m" style="left:1591.5px;top:742.5px;line-height:16px;font-size:13px;color:#1f2937;font-weight:400;transform:translateX(-50%);letter-spacing:0.2px">Edit</div>
<div class="abs" style="left:1623px;top:735px;width:69px;height:31px;border:1px solid #eceef1;border-radius:7px;background:#f9fafb;box-shadow:0 1px 2px rgba(15,23,42,.08)"></div>
<div class="abs t m" style="left:1657.5px;top:742.5px;line-height:16px;font-size:13px;color:#1f2937;font-weight:400;transform:translateX(-50%);letter-spacing:0.2px">History</div>
<div class="abs" style="left:1700px;top:735px;width:81px;height:31px;border:1px solid #eceef1;border-radius:7px;background:#f9fafb;box-shadow:0 1px 2px rgba(15,23,42,.08)"></div>
<div class="abs t m" style="left:1740.5px;top:742.5px;line-height:16px;font-size:13px;color:#1f2937;font-weight:400;transform:translateX(-50%);letter-spacing:0.2px">Duplicate</div>
<div class="abs" style="left:1790px;top:735px;width:69px;height:31px;border-radius:7px;background:linear-gradient(180deg,#8553e2,#7236d7);box-shadow:0 1px 2px rgba(109,40,217,.2)"></div>
<div class="abs t " style="left:1824.5px;top:742.5px;line-height:16px;font-size:13px;color:#ffffff;font-weight:700;transform:translateX(-50%);letter-spacing:-0.3px">Publish</div>
<div class="abs" style="left:1846px;top:1144px;width:42px;height:33px;border-radius:17px;background:linear-gradient(180deg,#8447e3,#6320c9);box-shadow:0 4px 14px rgba(124,58,237,.25)"></div>
<svg class="abs" style="left:1858px;top:1151.5px" width="18" height="18" viewBox="0 0 24 24" fill="none" stroke="#ffffff" stroke-width="1.7" stroke-linecap="round" stroke-linejoin="round"><path d="M21 15a2 2 0 0 1-2 2H7l-4 4V5a2 2 0 0 1 2-2h14a2 2 0 0 1 2 2z"/></svg>
</body></html>
